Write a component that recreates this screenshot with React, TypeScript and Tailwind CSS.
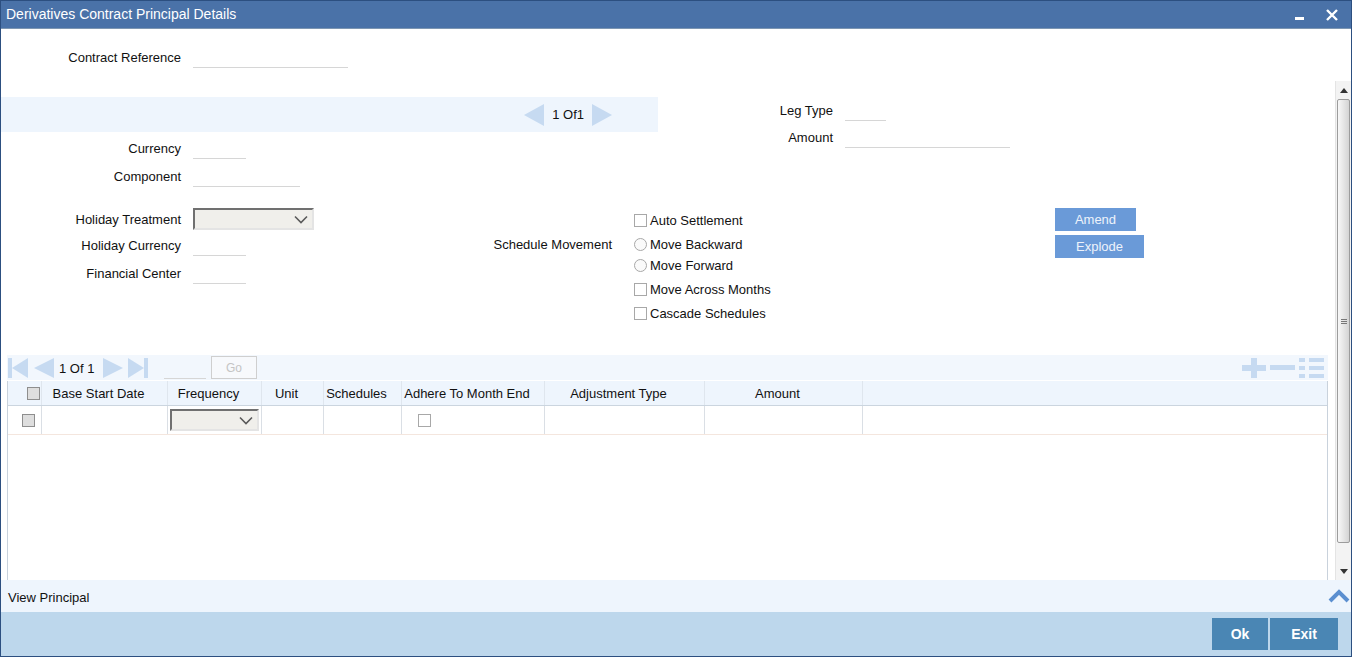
import React from 'react';

const Line = ({ w }: { w: string }) => <div className={`${w} h-[22px] border-b border-[#d6d6d6]`} />;

const Select = ({ w }: { w: string }) => (
  <div className={`${w} h-[22px] bg-[#f0efeb] border-2 border-t-[#707070] border-l-[#707070] border-r-[#e4e4e4] border-b-[#e4e4e4] flex items-center justify-end pr-[4px]`}>
    <svg width="14" height="9" viewBox="0 0 14 9">
      <polyline points="1,1.5 7,7.5 13,1.5" fill="none" stroke="#5a5a5a" strokeWidth="1.6" />
    </svg>
  </div>
);

const Check = ({ gray }: { gray?: boolean }) => (
  <span className={gray ? 'block w-[13px] h-[13px] border border-[#8e8e8e] bg-[#dedede]' : 'block w-[13px] h-[13px] border border-[#a8a8a8] bg-white'} />
);

const Radio = () => <span className="block w-[13px] h-[13px] rounded-full border border-[#a8a8a8] bg-[#fafafa]" />;

const Label = ({ children, w }: { children: React.ReactNode; w: string }) => (
  <div className={`${w} text-right shrink-0 pt-[1px]`}>{children}</div>
);

const TriLeft = () => (
  <svg width="20" height="22" viewBox="0 0 20 22"><polygon points="20,0 20,22 0,11" fill="#c6daf1" /></svg>
);
const TriRight = () => (
  <svg width="20" height="22" viewBox="0 0 20 22"><polygon points="0,0 0,22 20,11" fill="#c6daf1" /></svg>
);

const cols = [
  { w: 'w-[126px]', t: 'Base Start Date' },
  { w: 'w-[94px]', t: 'Frequency' },
  { w: 'w-[62px]', t: 'Unit' },
  { w: 'w-[78px]', t: 'Schedules' },
  { w: 'w-[143px]', t: 'Adhere To Month End' },
  { w: 'w-[160px]', t: 'Adjustment Type' },
  { w: 'w-[158px]', t: 'Amount' },
];

export default function App() {
  return (
    <div className="w-[1352px] h-[657px] flex flex-col border border-[#2c4f80] bg-white text-[13px] text-[#111] font-['Liberation_Sans',Arial,sans-serif] overflow-hidden">
      {/* title bar */}
      <div className="h-[28px] shrink-0 bg-[#4a72a8] border-b border-[#7d96b2] flex items-center justify-between pl-[5px] pr-[13px]">
        <span className="text-white text-[14px]">Derivatives Contract Principal Details</span>
        <div className="flex items-center gap-[22px]">
          <span className="block w-[9px] h-[3px] bg-white mt-[8px]" />
          <svg width="12" height="12" viewBox="0 0 12 12">
            <path d="M1 1 L11 11 M11 1 L1 11" stroke="#fff" strokeWidth="2.4" />
          </svg>
        </div>
      </div>

      {/* main */}
      <div className="flex-1 flex min-h-0">
        <div className="w-[1334px] flex flex-col">
          {/* contract reference */}
          <div className="flex items-center h-[22px] mt-[17px]">
            <Label w="w-[180px]">Contract Reference</Label>
            <div className="ml-[12px]"><Line w="w-[155px]" /></div>
          </div>

          {/* upper section */}
          <div className="flex mt-[29px]">
            <div className="w-[657px] flex flex-col">
              <div className="h-[35px] bg-[#eef5fd] flex items-center justify-end pr-[46px]">
                <TriLeft />
                <span className="mx-[8px] pt-[1px]">1 Of1</span>
                <TriRight />
              </div>
              <div className="flex items-center h-[22px] mt-[5px]">
                <Label w="w-[180px]">Currency</Label>
                <div className="ml-[12px]"><Line w="w-[53px]" /></div>
              </div>
              <div className="flex items-center h-[22px] mt-[6px]">
                <Label w="w-[180px]">Component</Label>
                <div className="ml-[12px]"><Line w="w-[107px]" /></div>
              </div>
            </div>
            <div className="flex flex-col">
              <div className="flex items-center h-[22px] mt-[2px]">
                <Label w="w-[175px]">Leg Type</Label>
                <div className="ml-[12px]"><Line w="w-[41px]" /></div>
              </div>
              <div className="flex items-center h-[22px] mt-[5px]">
                <Label w="w-[175px]">Amount</Label>
                <div className="ml-[12px]"><Line w="w-[165px]" /></div>
              </div>
            </div>
          </div>

          {/* holiday / schedule section */}
          <div className="flex mt-[21px]">
            <div className="w-[313px] flex flex-col">
              <div className="flex items-center h-[22px]">
                <Label w="w-[180px]">Holiday Treatment</Label>
                <div className="ml-[12px]"><Select w="w-[121px]" /></div>
              </div>
              <div className="flex items-center h-[22px] mt-[4px]">
                <Label w="w-[180px]">Holiday Currency</Label>
                <div className="ml-[12px]"><Line w="w-[53px]" /></div>
              </div>
              <div className="flex items-center h-[22px] mt-[6px]">
                <Label w="w-[180px]">Financial Center</Label>
                <div className="ml-[12px]"><Line w="w-[53px]" /></div>
              </div>
            </div>
            <div className="w-[298px] pt-[24px]">
              <div className="h-[24px] flex items-center justify-end pt-[1px]">Schedule Movement</div>
            </div>
            <div className="w-[421px] ml-[22px] flex flex-col">
              <div className="h-[24px] flex items-center gap-[3px]"><Check /><span className="pt-[1px]">Auto Settlement</span></div>
              <div className="h-[24px] flex items-center gap-[3px]"><Radio /><span className="pt-[1px]">Move Backward</span></div>
              <div className="h-[24px] -mt-[3px] flex items-center gap-[3px]"><Radio /><span className="pt-[1px]">Move Forward</span></div>
              <div className="h-[24px] flex items-center gap-[3px]"><Check /><span className="pt-[1px]">Move Across Months</span></div>
              <div className="h-[24px] flex items-center gap-[3px]"><Check /><span className="pt-[1px]">Cascade Schedules</span></div>
            </div>
            <div className="flex flex-col">
              <div className="w-[81px] h-[23px] bg-[#6a9ad8] text-[#eef3fb] flex items-center justify-center">Amend</div>
              <div className="w-[89px] h-[23px] mt-[4px] bg-[#6a9ad8] text-[#eef3fb] flex items-center justify-center">Explode</div>
            </div>
          </div>

          {/* grid */}
          <div className="flex-1 flex flex-col ml-[6px] w-[1321px] mt-[30px] min-h-0">
            <div className="h-[25px] bg-[#f2f7fd] flex items-center pl-[1px] pr-[4px]">
              <svg width="20" height="20" viewBox="0 0 20 20">
                <rect x="0" y="0" width="4" height="20" fill="#c6daf1" />
                <polygon points="20,0 20,20 4,10" fill="#c6daf1" />
              </svg>
              <svg className="ml-[6px]" width="20" height="20" viewBox="0 0 20 20">
                <polygon points="20,0 20,20 0,10" fill="#c6daf1" />
              </svg>
              <span className="ml-[5px] w-[39px] pt-[3px]">1 Of 1</span>
              <svg className="ml-[5px]" width="20" height="20" viewBox="0 0 20 20">
                <polygon points="0,0 0,20 20,10" fill="#c6daf1" />
              </svg>
              <svg className="ml-[5px]" width="20" height="20" viewBox="0 0 20 20">
                <polygon points="0,0 0,20 16,10" fill="#c6daf1" />
                <rect x="16" y="0" width="4" height="20" fill="#c6daf1" />
              </svg>
              <div className="ml-[16px] w-[42px] h-[22px] border-b border-[#d6d6d6]" />
              <div className="ml-[5px] w-[46px] h-[23px] border border-[#cfcfcf] bg-[#f7f9fc] text-[12px] text-[#c4c4c4] flex items-center justify-center">Go</div>
              <div className="ml-auto flex items-center gap-[4px]">
                <svg width="24" height="20" viewBox="0 0 24 20">
                  <rect x="0" y="7" width="24" height="6" fill="#c6daf1" />
                  <rect x="9" y="0" width="6" height="20" fill="#c6daf1" />
                </svg>
                <svg width="25" height="20" viewBox="0 0 25 20">
                  <rect x="0" y="7" width="25" height="5" fill="#c6daf1" />
                </svg>
                <svg width="25" height="20" viewBox="0 0 25 20">
                  <rect x="0" y="0" width="6" height="4" fill="#c6daf1" />
                  <rect x="10" y="0" width="15" height="4" fill="#c6daf1" />
                  <rect x="0" y="8" width="6" height="4" fill="#c6daf1" />
                  <rect x="10" y="8" width="15" height="4" fill="#c6daf1" />
                  <rect x="0" y="16" width="6" height="4" fill="#c6daf1" />
                  <rect x="10" y="16" width="15" height="4" fill="#c6daf1" />
                </svg>
              </div>
            </div>
            <div className="flex-1 flex flex-col mt-[1px] border-l border-r border-[#c9d2dc] w-[1321px]">
              <div className="h-[25px] flex bg-[#eef5fd] border-b border-[#cbd5df]">
                <div className="w-[34px] flex items-center justify-end pr-[1px] border-r border-[#dfe6ee]"><Check gray /></div>
                {cols.map((c) => (
                  <div key={c.t} className={`${c.w} flex items-center justify-center pr-[12px] pt-[2px] border-r border-[#dfe6ee]`}>{c.t}</div>
                ))}
                <div className="flex-1" />
              </div>
              <div className="h-[29px] flex border-b border-[#f4e6de]">
                <div className="w-[34px] flex items-center pl-[14px] border-r border-[#dadfe5]"><Check gray /></div>
                <div className="w-[126px] border-r border-[#dadfe5]" />
                <div className="w-[94px] flex items-center pl-[2px] border-r border-[#dadfe5]"><Select w="w-[89px]" /></div>
                <div className="w-[62px] border-r border-[#dadfe5]" />
                <div className="w-[78px] border-r border-[#dadfe5]" />
                <div className="w-[143px] flex items-center pl-[16px] border-r border-[#dadfe5]"><Check /></div>
                <div className="w-[160px] border-r border-[#dadfe5]" />
                <div className="w-[158px] border-r border-[#dadfe5]" />
                <div className="flex-1" />
              </div>
              <div className="flex-1" />
            </div>
          </div>
        </div>

        {/* scrollbar */}
        <div className="w-[16px] pt-[52px] flex flex-col">
          <div className="flex-1 flex flex-col bg-[#f3f3f3] border-l border-[#e4e4e4]">
            <div className="h-[18px] flex items-center justify-center">
              <svg width="8" height="5" viewBox="0 0 8 5"><polygon points="0,5 8,5 4,0" fill="#333" /></svg>
            </div>
            <div className="h-[444px] mx-[1px] rounded-[2px] border border-[#9c9c9c] bg-gradient-to-r from-[#f8f8f8] to-[#d4d4d4] flex items-center justify-center">
              <div className="flex flex-col gap-[1px]">
                <span className="block w-[6px] h-[1px] bg-[#777]" />
                <span className="block w-[6px] h-[1px] bg-[#777]" />
                <span className="block w-[6px] h-[1px] bg-[#777]" />
              </div>
            </div>
            <div className="flex-1" />
            <div className="h-[17px] flex items-center justify-center">
              <svg width="8" height="5" viewBox="0 0 8 5"><polygon points="0,0 8,0 4,5" fill="#333" /></svg>
            </div>
          </div>
        </div>
      </div>

      {/* footer */}
      <div className="h-[32px] shrink-0 bg-[#eef5fd] flex items-center justify-between pl-[7px] pr-[1px]">
        <span className="pt-[3px]">View Principal</span>
        <svg width="22" height="14" viewBox="0 0 22 14">
          <polyline points="2,12 11,3 20,12" fill="none" stroke="#5b8fd0" strokeWidth="4" />
        </svg>
      </div>
      <div className="h-[44px] shrink-0 bg-[#bdd7ec] flex items-start justify-end pt-[6px] pr-[13px] gap-[2px]">
        <div className="w-[56px] h-[32px] bg-[#4a86b4] text-white text-[14px] font-bold flex items-center justify-center">Ok</div>
        <div className="w-[68px] h-[32px] bg-[#4a86b4] text-white text-[14px] font-bold flex items-center justify-center">Exit</div>
      </div>
    </div>
  );
}
